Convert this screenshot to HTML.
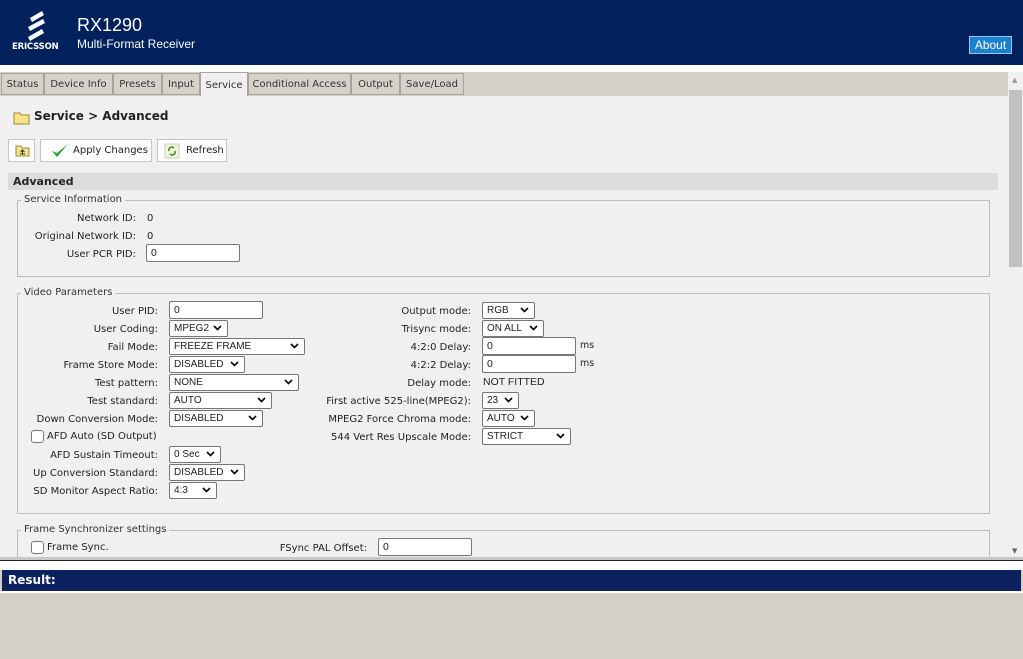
<!DOCTYPE html>
<html><head><meta charset="utf-8">
<style>
*{box-sizing:border-box;margin:0;padding:0}
body{width:1023px;height:659px;overflow:hidden;background:#d4d0c8;font-family:"DejaVu Sans",Verdana,sans-serif;font-size:10px;color:#222;position:relative}
.a{position:absolute;white-space:nowrap}
.hdr{left:0;top:0;width:1023px;height:65px;background:#00215c}
.tabbar{left:0;top:72px;width:1008px;height:24px;background:#d4d0c8}
.tab{position:absolute;top:1px;height:22px;border:1px solid #a8a49c;background:#d6d2ca;font-size:10px;line-height:21px;text-align:center;color:#333}
.content{left:0;top:96px;width:1008px;height:461px;background:#f0f0f0;overflow:hidden}
.lbl{position:absolute;text-align:right;white-space:nowrap;line-height:12px;margin-top:2px}
.inp{position:absolute;height:18px;background:#fff;border:1px solid #767676;border-radius:2px;font-family:"Liberation Sans",Arial,sans-serif;font-size:10.5px;padding-left:4px;line-height:16px}
.sel{position:absolute;height:17px;background:#fff;border:1px solid #767676;border-radius:2px;font-family:"Liberation Sans",Arial,sans-serif;font-size:10px;padding-left:4px;line-height:15px}
.sel svg{position:absolute;right:5px;top:4px;background:#fff}
.fs{position:absolute;border:1px solid #bdbdbd}
.leg{position:absolute;background:#f0f0f0;padding:0 3px;top:-7px;left:3px;line-height:12px;color:#333}
.cb{position:absolute;width:13px;height:13px;border:1px solid #767676;border-radius:3px;background:#fff}
.btn{position:absolute;height:23px;border:1px solid #c6c6c6;background:#fff;line-height:21px}
</style></head><body>
<div class="a hdr">
  <svg class="a" style="left:24px;top:11px" width="24" height="30" viewBox="0 0 24 30">
    <path d="M6 7 L18 0 L20 4 L8 11Z M4 16 L19 8 L21 12 L6 20Z M4 26 L18 18 L20 22 L6 30Z" fill="#fff"/>
  </svg>
  <div class="a" style="left:12px;top:42px;color:#fff;font-weight:bold;font-size:8.5px;font-family:'DejaVu Sans',sans-serif;letter-spacing:-0.2px">ERICSSON</div>
  <div class="a" style="left:77px;top:15px;color:#fff;font-family:'Liberation Sans',Arial,sans-serif;font-size:18px">RX1290</div>
  <div class="a" style="left:77px;top:37px;color:#fff;font-family:'Liberation Sans',Arial,sans-serif;font-size:12px">Multi-Format Receiver</div>
  <div class="a" style="left:969px;top:36px;width:43px;height:18px;background:#1a82d0;border:1px solid #9cc6ea;color:#fff;font-family:'Liberation Sans',Arial,sans-serif;font-size:12px;line-height:16px;text-align:center">About</div>
</div>
<div class="a" style="left:0;top:65px;width:1023px;height:7px;background:#fff"></div>
<div class="a tabbar">
  <div class="tab" style="left:1px;width:43px">Status</div>
  <div class="tab" style="left:44px;width:69px">Device Info</div>
  <div class="tab" style="left:113px;width:49px">Presets</div>
  <div class="tab" style="left:162px;width:38px">Input</div>
  <div class="tab" style="left:200px;width:48px;top:0;height:24px;background:#f0f0f0;border-bottom:none;line-height:25px">Service</div>
  <div class="tab" style="left:248px;width:103px">Conditional Access</div>
  <div class="tab" style="left:351px;width:49px">Output</div>
  <div class="tab" style="left:400px;width:64px">Save/Load</div>
</div>
<div class="a" style="left:1008px;top:72px;width:15px;height:485px;background:#f0f0f0"></div>
<div class="a" style="left:1009px;top:90px;width:13px;height:177px;background:#c1c1c1"></div>
<div class="a" style="left:1012px;top:76px;color:#999;font-size:7px">▲</div>
<div class="a" style="left:1012px;top:547px;color:#666;font-size:7px">▼</div>
<div class="a content">
  <svg class="a" style="left:13px;top:15px" width="17" height="14" viewBox="0 0 17 14"><path d="M1 2h6l1 2h8v9H1z" fill="#f7e38a" stroke="#9a8a40"/></svg>
  <div class="a" style="left:34px;top:13px;font-weight:bold;font-size:12px">Service &gt; Advanced</div>
  <div class="btn" style="left:8px;top:43px;width:27px"><svg style="position:absolute;left:6px;top:4px" width="15" height="13" viewBox="0 0 15 13"><path d="M1 2h5l1 2h7v8H1z" fill="#f7e38a" stroke="#9a8a40"/><path d="M7.5 10V6M5.5 8l2-2 2 2M5 10h5" stroke="#333" fill="none"/></svg></div>
  <div class="btn" style="left:40px;top:43px;width:112px"><svg style="position:absolute;left:10px;top:3px" width="18" height="16" viewBox="0 0 18 16"><path d="M1 8l5 6L17 1 6 10z" fill="#2aa32a"/></svg><span style="position:absolute;left:32px;font-size:10px">Apply Changes</span></div>
  <div class="btn" style="left:157px;top:43px;width:70px"><svg style="position:absolute;left:6px;top:3px" width="16" height="16" viewBox="0 0 16 16"><rect x="1" y="1" width="14" height="14" fill="#f6f3d8" stroke="#ccc"/><path d="M5 8a3 3 0 0 1 5-3M11 8a3 3 0 0 1-5 3" stroke="#3a9a2a" stroke-width="1.6" fill="none"/></svg><span style="position:absolute;left:28px;font-size:10px">Refresh</span></div>
  <div class="a" style="left:8px;top:77px;width:990px;height:17px;background:#dcdcdc"></div>
  <div class="a" style="left:13px;top:79px;font-weight:bold;font-size:11px">Advanced</div>

  <div class="fs" style="left:17px;top:104px;width:973px;height:77px">
    <div class="leg">Service Information</div>
  </div>
  <div class="lbl" style="right:872px;top:115px">Network ID:</div><div class="a" style="left:147px;top:117px">0</div>
  <div class="lbl" style="right:872px;top:133px">Original Network ID:</div><div class="a" style="left:147px;top:135px">0</div>
  <div class="lbl" style="right:872px;top:151px">User PCR PID:</div><div class="inp" style="left:146px;top:148px;width:94px">0</div>

  <div class="fs" style="left:17px;top:197px;width:973px;height:221px">
    <div class="leg">Video Parameters</div>
  </div>
  <div class="lbl" style="right:850px;top:208px">User PID:</div><div class="inp" style="left:169px;top:205px;width:94px">0</div>
  <div class="lbl" style="right:850px;top:226px">User Coding:</div><div class="sel" style="left:169px;top:224px;width:59px">MPEG2<svg width="9" height="6"><path d="M1 1l3.5 3.5L8 1" stroke="#000" stroke-width="1.6" fill="none"/></svg></div>
  <div class="lbl" style="right:850px;top:244px">Fail Mode:</div><div class="sel" style="left:169px;top:242px;width:136px">FREEZE FRAME<svg width="9" height="6"><path d="M1 1l3.5 3.5L8 1" stroke="#000" stroke-width="1.6" fill="none"/></svg></div>
  <div class="lbl" style="right:850px;top:262px">Frame Store Mode:</div><div class="sel" style="left:169px;top:260px;width:76px">DISABLED<svg width="9" height="6"><path d="M1 1l3.5 3.5L8 1" stroke="#000" stroke-width="1.6" fill="none"/></svg></div>
  <div class="lbl" style="right:850px;top:280px">Test pattern:</div><div class="sel" style="left:169px;top:278px;width:130px">NONE<svg width="9" height="6"><path d="M1 1l3.5 3.5L8 1" stroke="#000" stroke-width="1.6" fill="none"/></svg></div>
  <div class="lbl" style="right:850px;top:298px">Test standard:</div><div class="sel" style="left:169px;top:296px;width:103px">AUTO<svg width="9" height="6"><path d="M1 1l3.5 3.5L8 1" stroke="#000" stroke-width="1.6" fill="none"/></svg></div>
  <div class="lbl" style="right:850px;top:316px">Down Conversion Mode:</div><div class="sel" style="left:169px;top:314px;width:94px">DISABLED<svg width="9" height="6"><path d="M1 1l3.5 3.5L8 1" stroke="#000" stroke-width="1.6" fill="none"/></svg></div>
  <div class="cb" style="left:31px;top:334px"></div><div class="a" style="left:47px;top:335px;line-height:12px">AFD Auto (SD Output)</div>
  <div class="lbl" style="right:850px;top:352px">AFD Sustain Timeout:</div><div class="sel" style="left:169px;top:350px;width:52px">0 Sec<svg width="9" height="6"><path d="M1 1l3.5 3.5L8 1" stroke="#000" stroke-width="1.6" fill="none"/></svg></div>
  <div class="lbl" style="right:850px;top:370px">Up Conversion Standard:</div><div class="sel" style="left:169px;top:368px;width:76px">DISABLED<svg width="9" height="6"><path d="M1 1l3.5 3.5L8 1" stroke="#000" stroke-width="1.6" fill="none"/></svg></div>
  <div class="lbl" style="right:850px;top:388px">SD Monitor Aspect Ratio:</div><div class="sel" style="left:169px;top:386px;width:48px">4:3<svg width="9" height="6"><path d="M1 1l3.5 3.5L8 1" stroke="#000" stroke-width="1.6" fill="none"/></svg></div>

  <div class="lbl" style="right:537px;top:208px">Output mode:</div><div class="sel" style="left:482px;top:206px;width:53px">RGB<svg width="9" height="6"><path d="M1 1l3.5 3.5L8 1" stroke="#000" stroke-width="1.6" fill="none"/></svg></div>
  <div class="lbl" style="right:537px;top:226px">Trisync mode:</div><div class="sel" style="left:482px;top:224px;width:62px">ON ALL<svg width="9" height="6"><path d="M1 1l3.5 3.5L8 1" stroke="#000" stroke-width="1.6" fill="none"/></svg></div>
  <div class="lbl" style="right:537px;top:244px">4:2:0 Delay:</div><div class="inp" style="left:482px;top:241px;width:94px">0</div><div class="a" style="left:580px;top:244px;font-size:9.5px">ms</div>
  <div class="lbl" style="right:537px;top:262px">4:2:2 Delay:</div><div class="inp" style="left:482px;top:259px;width:94px">0</div><div class="a" style="left:580px;top:262px;font-size:9.5px">ms</div>
  <div class="lbl" style="right:537px;top:280px">Delay mode:</div><div class="a" style="left:483px;top:280px;font-family:'Liberation Sans',Arial,sans-serif;font-size:10.5px">NOT FITTED</div>
  <div class="lbl" style="right:537px;top:298px">First active 525-line(MPEG2):</div><div class="sel" style="left:482px;top:296px;width:37px">23<svg width="9" height="6"><path d="M1 1l3.5 3.5L8 1" stroke="#000" stroke-width="1.6" fill="none"/></svg></div>
  <div class="lbl" style="right:537px;top:316px">MPEG2 Force Chroma mode:</div><div class="sel" style="left:482px;top:314px;width:53px">AUTO<svg width="9" height="6"><path d="M1 1l3.5 3.5L8 1" stroke="#000" stroke-width="1.6" fill="none"/></svg></div>
  <div class="lbl" style="right:537px;top:334px">544 Vert Res Upscale Mode:</div><div class="sel" style="left:482px;top:332px;width:89px">STRICT<svg width="9" height="6"><path d="M1 1l3.5 3.5L8 1" stroke="#000" stroke-width="1.6" fill="none"/></svg></div>

  <div class="fs" style="left:17px;top:434px;width:973px;height:60px">
    <div class="leg">Frame Synchronizer settings</div>
  </div>
  <div class="cb" style="left:31px;top:445px"></div><div class="a" style="left:47px;top:446px;line-height:12px">Frame Sync.</div>
  <div class="lbl" style="right:641px;top:445px">FSync PAL Offset:</div><div class="inp" style="left:378px;top:442px;width:94px">0</div>
</div>
<div class="a" style="left:0;top:557px;width:1023px;height:3px;background:#c8c8c8"></div>
<div class="a" style="left:0;top:560px;width:1023px;height:1px;background:#222"></div>
<div class="a" style="left:0;top:561px;width:1023px;height:9px;background:#fff"></div>
<div class="a" style="left:2px;top:570px;width:1019px;height:21px;background:#0b2160;color:#fff;font-weight:bold;font-size:12px;line-height:21px;padding-left:6px">Result:</div>
<div class="a" style="left:0;top:591px;width:1023px;height:2px;background:#fff"></div>
</body></html>
